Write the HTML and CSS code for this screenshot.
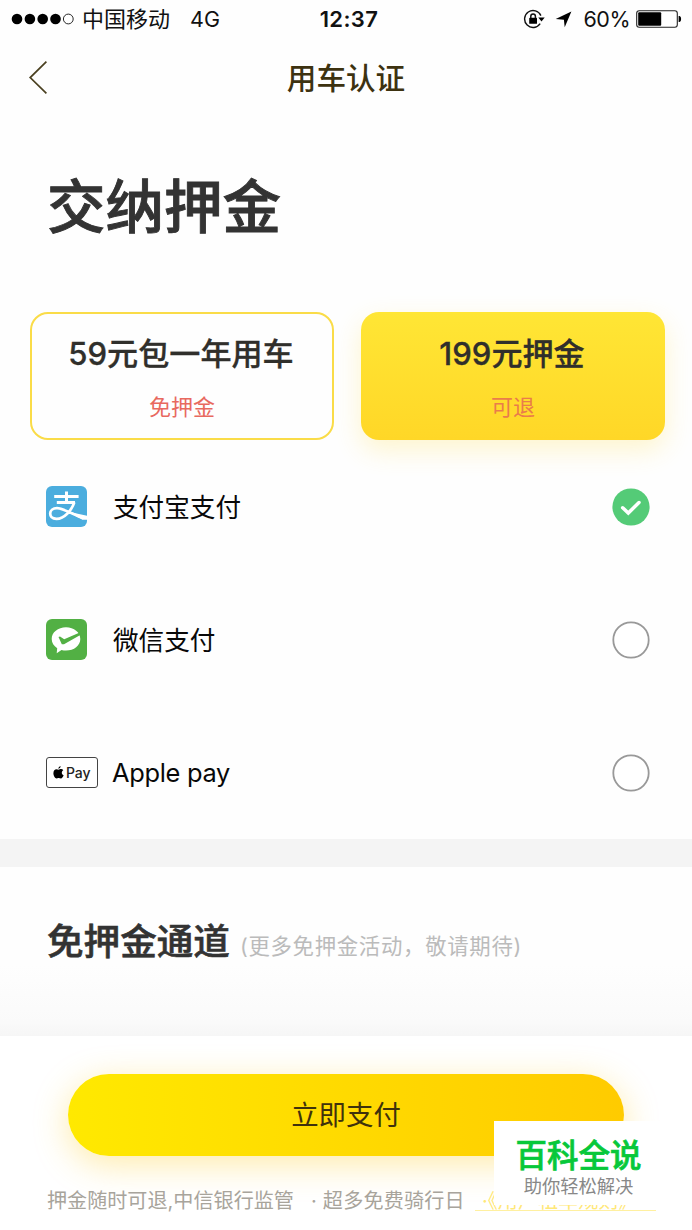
FILE: index.html
```html
<!DOCTYPE html>
<html lang="zh-CN">
<head>
<meta charset="utf-8">
<title>用车认证</title>
<link rel="stylesheet" href="styles.css">
</head>
<body>
<div class="screen">
  <header class="status">
    <div class="carrier">
      <svg class="signal" width="64" height="12" viewBox="0 0 64 12"><circle cx="6" cy="6" r="5.3"/><circle cx="18.9" cy="6" r="5.3"/><circle cx="31.7" cy="6" r="5.3"/><circle cx="44.5" cy="6" r="5.3"/><circle cx="57.3" cy="6" r="4.9" fill="#fff" stroke="#111" stroke-width=".9"/></svg>
      <span>中国移动</span><span class="net">4G</span>
    </div>
    <div class="clock">12:37</div>
    <div class="indicators">
      <svg class="lock" width="22" height="20" viewBox="0 0 22 20"><path d="M17.9 6.6A8.5 8.5 0 1 0 17.2 14.7" fill="none" stroke="#111" stroke-width="1.4"/><path d="M15.3 8.6h6.4l-3.2 4z"/><rect x="6.2" y="8.8" width="7.8" height="6" rx=".6"/><path d="M7.8 9V7.2a2.3 2.3 0 0 1 4.6 0V9" fill="none" stroke="#111" stroke-width="1.5"/></svg>
      <svg class="arrow" width="17" height="17" viewBox="0 0 17 17"><path d="M16.4.6 9.7 16.3 8.9 8.7.7 8z"/></svg>
      <span class="percent">60%</span>
      <svg class="battery" width="46" height="18" viewBox="0 0 46 18"><rect x=".7" y=".7" width="40.6" height="16.6" rx="2.5" fill="#fff" stroke="#222" stroke-width="1.1"/><rect x="2.2" y="2.2" width="23" height="13.6" rx="1"/><path d="M42.6 6h1q1.5.4 1.5 3t-1.5 3h-1z"/></svg>
    </div>
  </header>

  <nav class="nav">
    <svg class="back" width="22" height="36" viewBox="0 0 22 36"><path d="M18.4 1.7 2.2 17.6 18.4 33.4" fill="none" stroke="#4a4020" stroke-width="1.7"/></svg>
    <div class="nav-title">用车认证</div>
  </nav>

  <h1 class="title">交纳押金</h1>

  <div class="plans">
    <div class="plan"><div class="plan-name">59元包一年用车</div><div class="plan-note">免押金</div></div>
    <div class="plan selected"><div class="plan-name">199元押金</div><div class="plan-note">可退</div></div>
  </div>

  <div class="methods">
    <div class="method">
      <svg class="logo" width="41" height="41" viewBox="0 0 41 41"><rect width="41" height="41" rx="6" fill="#4badde"/><path d="M8.2 10.5H32.6M20.5 5.5V16M10.8 16.4H29" fill="none" stroke="#fff" stroke-width="3"/><path d="M28.3 16.4C25.8 24 18.5 32.8 10.5 32.8 6 32.8 4.2 30.4 4.2 27.6 4.2 24.5 6.8 22.2 11 22.2 17 22.2 26 28 37 32.2" fill="none" stroke="#fff" stroke-width="2.7"/><path d="M22.5 25.8 41 29.7V33.8L36.5 33.8z" fill="#fff"/></svg>
      <div class="method-name">支付宝支付</div>
      <svg class="radio" width="38" height="38" viewBox="0 0 38 38"><circle cx="19" cy="19" r="18.6" fill="#54cb77"/><path d="M10.7 19.8 16.3 25 27 14.5" fill="none" stroke="#fff" stroke-width="3.5" stroke-linecap="round"/></svg>
    </div>
    <div class="method">
      <svg class="logo" width="41" height="41" viewBox="0 0 41 41"><rect width="41" height="41" rx="6" fill="#52b044"/><path d="M20 8.3C28 8.3 34.3 13.4 34.3 20S28 31.6 20 31.6Q17.6 31.6 15.5 31L10.7 34.3 11.2 29.2C7.8 27 5.7 23.8 5.7 20 5.7 13.4 12 8.3 20 8.3z" fill="#fff"/><path d="M12.5 18 14 17.6 18.2 20.2 33.2 13.8 34.3 16 18 25.3 15.8 25.2z" fill="#52b044"/></svg>
      <div class="method-name">微信支付</div>
      <svg class="radio" width="38" height="38" viewBox="0 0 38 38"><circle cx="19" cy="19" r="17.7" fill="#fff" stroke="#999" stroke-width="1.8"/></svg>
    </div>
    <div class="method">
      <div class="apple-pay"><svg width="11" height="13" viewBox="0 0 11 13"><path d="M5.5 3.8C6.4 3.8 7 3.1 8.1 3.1 9 3.1 9.8 3.5 10.3 4.2 8.1 5.6 8.5 8.4 10.7 9.3 9.9 11.2 8.9 12.4 8 12.4 7.1 12.4 6.7 12 5.8 12 4.8 12 4.4 12.4 3.6 12.4 2 12.4.4 9.8.4 7.3.4 4.7 1.8 3.2 3.5 3.2 4.3 3.2 4.9 3.8 5.5 3.8zM5.3 2.9Q5.3.7 7.7.1 7.8 2.3 5.3 2.9z"/></svg><span>Pay</span></div>
      <div class="method-name latin">Apple pay</div>
      <svg class="radio" width="38" height="38" viewBox="0 0 38 38"><circle cx="19" cy="19" r="17.7" fill="#fff" stroke="#999" stroke-width="1.8"/></svg>
    </div>
  </div>

  <div class="divider"></div>

  <section class="channel">
    <h2>免押金通道</h2><span>(更多免押金活动，敬请期待)</span>
  </section>

  <footer class="pay">
    <div class="pay-button">立即支付</div>
    <div class="terms"><span class="deposit">押金随时可退,中信银行监管</span><span class="rides">·&nbsp;超多免费骑行日</span><span class="rules">·《用户租车规则》</span></div>
    <div class="stamp"><div class="stamp-name">百科全说</div><div class="stamp-note">助你轻松解决</div></div>
  </footer>
</div>
</body>
</html>
```
FILE: styles.css
```css
* { box-sizing: border-box; }
body { margin: 0; background: #fff; }
svg { display: block; flex: none; }

.screen {
  width: 692px;
  height: 1230px;
  overflow: hidden;
  display: flex;
  flex-direction: column;
  background: #fefefe;
  color: #111;
  font-family: Inter, "Noto Sans CJK SC", sans-serif;
  white-space: nowrap;
}

.status {
  height: 38px;
  flex: none;
  display: grid;
  grid-template-columns: 1fr auto 1fr;
  align-items: center;
  padding: 0 10px 0 11px;
  font-size: 22px;
  line-height: 38px;
}
.carrier { display: flex; align-items: center; }
.signal { margin-right: 7px; }
.net { margin-left: 20px; font-size: 21.5px; }
.clock { font-size: 22px; font-weight: 600; padding-left: 5px; letter-spacing: .4px; }
.indicators { display: flex; align-items: center; justify-content: flex-end; }
.lock { margin-right: 10px; }
.arrow { margin-right: 11px; }
.percent { font-size: 21.5px; letter-spacing: -.5px; margin-right: 6px; }

.nav {
  height: 80px;
  flex: none;
  display: grid;
  grid-template-columns: 60px 1fr 60px;
  align-items: center;
}
.back { margin-left: 28px; }
.nav-title {
  text-align: center;
  font-size: 29.6px;
  font-weight: 500;
  line-height: 40px;
  color: #3d3210;
}

.title {
  margin: 49px 0 65px 47px;
  font-size: 58.5px;
  line-height: 80px;
  font-weight: 500;
  color: #333;
  -webkit-text-stroke: .9px #333;
}

.plans {
  display: flex;
  gap: 27px;
  padding: 0 27px 0 30px;
}
.plan {
  width: 304px;
  height: 128px;
  padding-top: 19px;
  border: 2px solid #fadc48;
  border-radius: 18px;
  text-align: center;
}
.plan.selected {
  border: 0;
  padding-top: 21px;
  background: linear-gradient(#ffe635, #ffd727);
  box-shadow: 0 10px 26px rgba(255, 218, 50, .24);
}
.plan-name {
  font-size: 31.1px;
  line-height: 42px;
  font-weight: 500;
  color: #302f2b;
  -webkit-text-stroke: .3px #302f2b;
  position: relative;
  left: -1px;
}
.plan-note {
  margin-top: 17px;
  font-size: 22px;
  line-height: 30px;
  color: #e8695f;
}
.selected .plan-note { color: #ea7c4a; }

.methods { display: flex; flex-direction: column; }
.method {
  height: 133px;
  flex: none;
  display: flex;
  align-items: center;
  padding: 0 42px 0 46px;
}
.logo { margin-right: 26px; }
.method-name { flex: 1; padding-top: 2px; font-size: 25.6px; line-height: 36px; color: #080808; }
.latin { font-size: 25.4px; letter-spacing: -.3px; padding-top: 0; margin-left: -1px; }
.apple-pay {
  width: 52px;
  height: 31px;
  margin-right: 15px;
  display: flex;
  align-items: center;
  justify-content: center;
  gap: 1.5px;
  border: 1.5px solid #444;
  border-radius: 3px;
  background: #fff;
  font-size: 14px;
  font-weight: 500;
  color: #222;
}

.divider { height: 28px; flex: none; background: #f4f4f4; }

.channel {
  height: 169px;
  flex: none;
  display: flex;
  align-items: baseline;
  padding: 50px 0 0 47px;
  background: linear-gradient(#fefefe 58%, #fafafa 92%, #f6f6f6);
}
.channel h2 {
  margin: 0 10px 0 0;
  font-size: 36.6px;
  line-height: 50px;
  font-weight: 500;
  color: #333;
  -webkit-text-stroke: .6px #333;
}
.channel span { position: relative; top: -1px; font-size: 21.4px; letter-spacing: .7px; color: #bbb; }

.pay { position: relative; height: 195px; flex: none; padding-top: 38px; background: #fff; overflow: hidden; }
.pay-button {
  width: 556px;
  height: 82px;
  margin-left: 68px;
  border-radius: 41px;
  background: linear-gradient(90deg, #ffe900, #ffcb00);
  box-shadow: 0 8px 34px rgba(255, 205, 40, .4);
  text-align: center;
  font-size: 27.4px;
  line-height: 83px;
  color: #3f320c;
}
.terms {
  display: flex;
  margin: 29px 0 0 47px;
  font-size: 20.1px;
  line-height: 32px;
  color: #a8a49b;
}
.deposit { width: 264px; }
.rides { width: 164px; letter-spacing: .2px; }
.rules { width: 181px; height: 26px; padding-left: 7px; border-bottom: 1px solid #fff0a0; color: #ffe878; }
.stamp {
  position: absolute;
  left: 494px;
  top: 85px;
  width: 175px;
  height: 84px;
  padding: 15px 6px 0 0;
  background: #fff;
  text-align: center;
}
.stamp-name {
  font-size: 31.5px;
  line-height: 40px;
  font-weight: 500;
  color: #07c83a;
  -webkit-text-stroke: .7px #07c83a;
}
.stamp-note { margin-top: -1px; font-size: 18.3px; line-height: 22px; color: #888; }
```
